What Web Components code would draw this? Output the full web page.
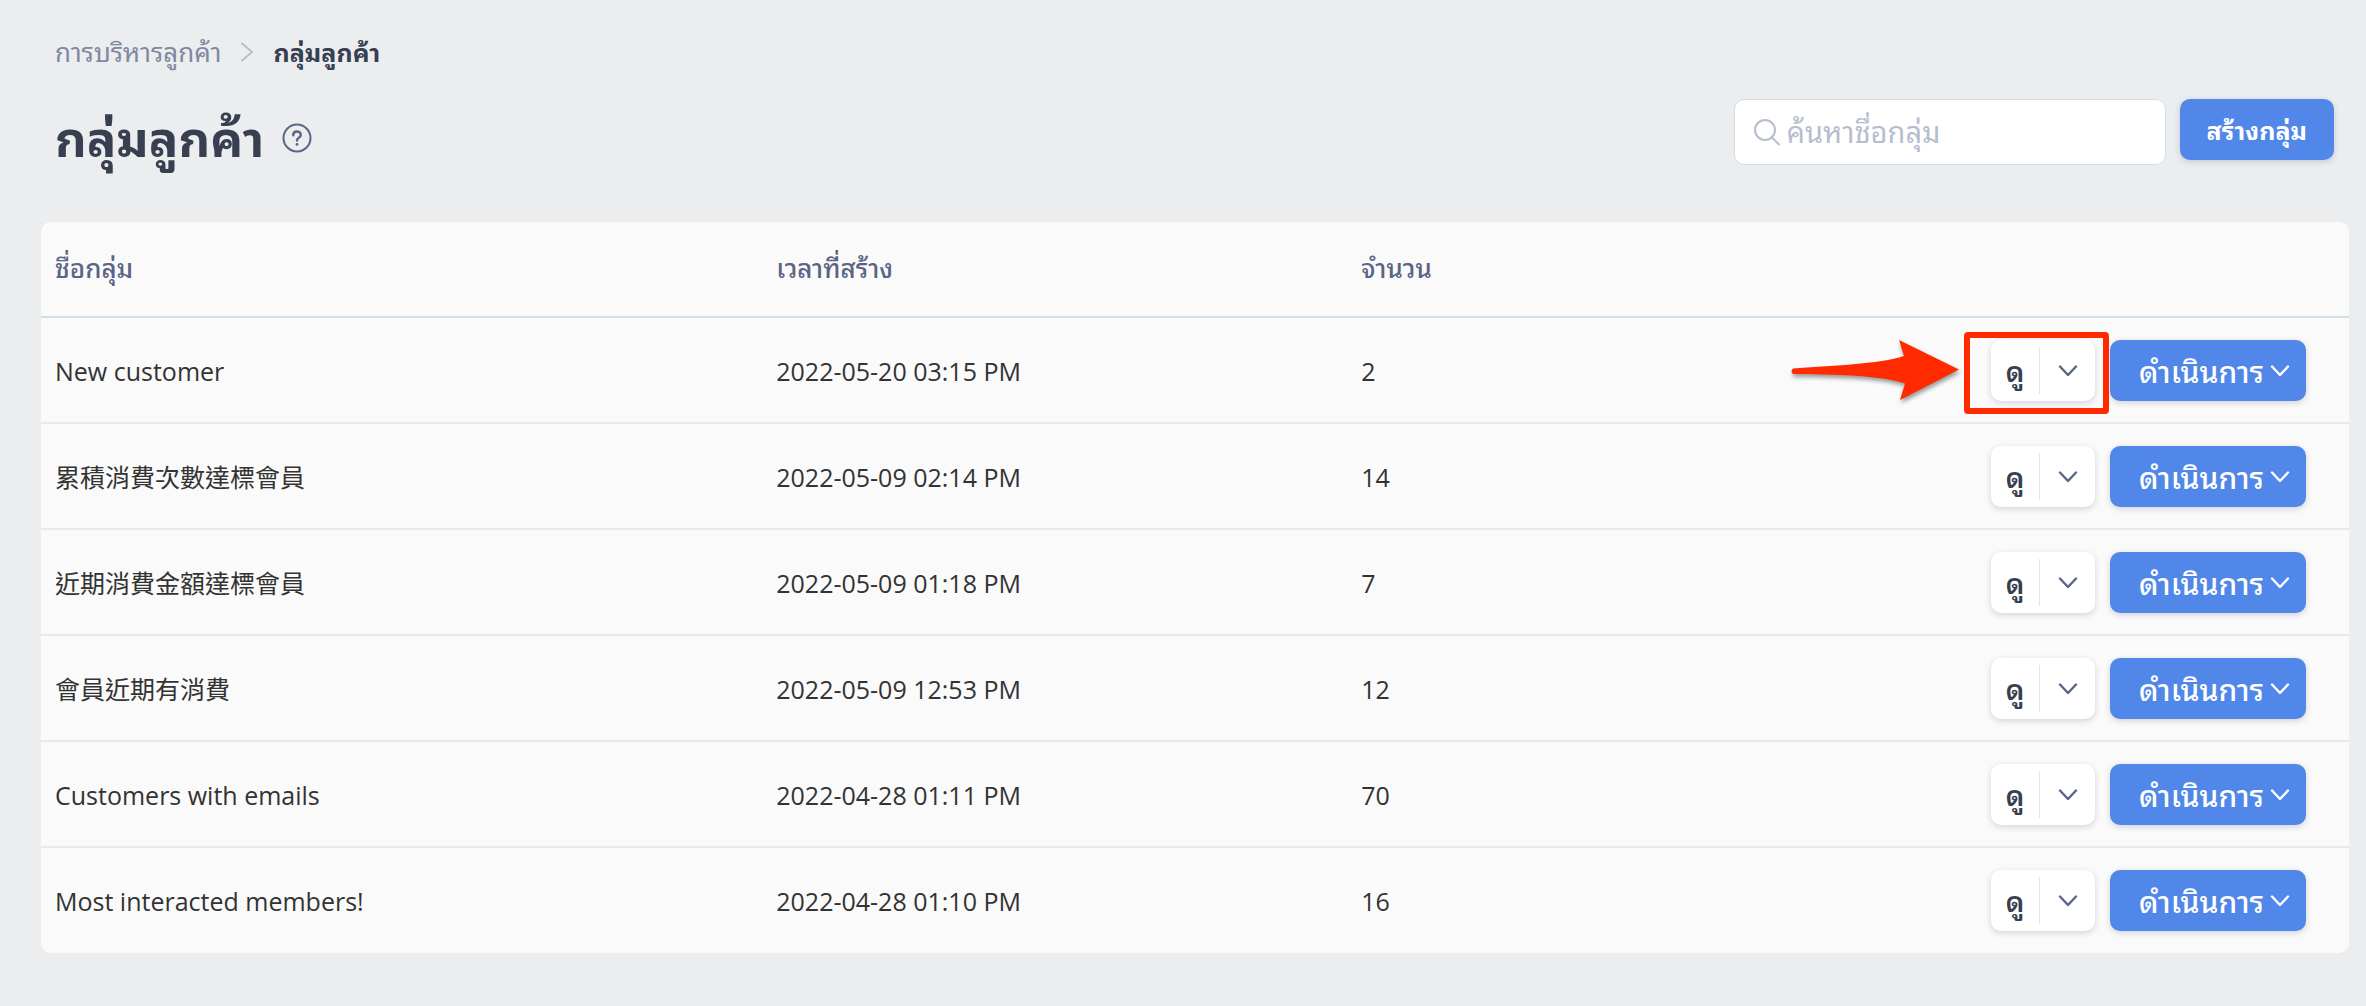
<!DOCTYPE html>
<html lang="th">
<head>
<meta charset="utf-8">
<title>กลุ่มลูกค้า</title>
<style>
:root{
  --blue:#5187e8; --ink:#373f50; --slate:#5a6485; --muted:#8088a0; --faint:#b6bdcf;
  --radius:10px; --shadow:0 2px 6px rgba(40,40,80,.18);
}
*{box-sizing:border-box}
body{margin:0;background:#ecedef;color:#333;font-family:"Open Sans","Noto Sans","Thonburi","Noto Sans Thai Looped","Noto Looped Thai","Loma","Garuda","Waree","Sarabun","Noto Sans Thai","Noto Sans CJK TC",sans-serif;font-size:25px;line-height:36px}
</style>
</head>
<body>
<customer-groups-page></customer-groups-page>
<script>
const define = (name, html, setup) => {
  const template = document.createElement('template');
  template.innerHTML = `<style>*{box-sizing:border-box}button,input{font:inherit;line-height:inherit;margin:0}button{cursor:pointer;border:0}svg{display:block;flex:none}</style>${html}`;
  customElements.define(name, class extends HTMLElement {
    constructor() {
      super();
      this.attachShadow({mode: 'open'}).append(template.content.cloneNode(true));
    }
    connectedCallback() { if (setup) setup(this, this.shadowRoot); }
  });
};

define('chevron-icon', `
<style>:host{display:block}</style>
<svg width="20" height="12" viewBox="0 0 20 12" fill="none" stroke="currentColor" stroke-width="2.4" stroke-linecap="round" stroke-linejoin="round"><path d="M2 1.5 10 10l8-8.5"/></svg>`);

define('bread-crumb', `
<style>
:host{display:block}
nav{display:flex;align-items:center;gap:19px}
a{color:var(--muted);text-decoration:none;font-size:26px}
b{color:var(--ink);font-weight:700}
</style>
<nav><a href="#"><slot name="parent"></slot></a>
<svg width="14" height="20" viewBox="0 0 14 20" fill="none" stroke="#b6bdcf" stroke-width="2" stroke-linecap="round" stroke-linejoin="round"><path d="m2 1.500 10 8.500-10 8.500"/></svg>
<b><slot></slot></b></nav>`);

define('page-title', `
<style>
:host{display:flex;align-items:center;gap:18px;color:var(--ink)}
h1{margin:0;font-size:49px;line-height:72px;font-weight:700}
button{background:none;padding:0;color:var(--slate)}
</style>
<h1><slot></slot></h1>
<button aria-label="?"><svg width="30" height="30" viewBox="0 0 30 30" fill="none" stroke="currentColor" stroke-width="2" stroke-linecap="round"><circle cx="15" cy="15" r="13.500"/><path stroke-width="2.400" d="M11.200 12.200c0-2.300 1.700-3.700 3.800-3.700s3.800 1.400 3.800 3.400c0 2.700-3.800 2.800-3.800 5.600"/><circle cx="15" cy="21.400" r=".6" fill="currentColor" stroke-width="1.600"/></svg></button>`);

define('search-box', `
<style>
:host{display:block;width:432px}
label{display:flex;align-items:center;gap:6px;height:66px;padding:0 18px;background:#fff;border:1px solid #d3dde6;border-radius:var(--radius);color:var(--faint)}
input{flex:1;min-width:0;border:0;outline:0;padding:0;background:none;color:var(--ink);font-size:29px;line-height:48px}
input::placeholder{color:var(--faint);opacity:1}
</style>
<label><svg width="28" height="28" viewBox="0 0 28 28" fill="none" stroke="currentColor" stroke-width="2" stroke-linecap="round"><circle cx="12" cy="12" r="10"/><path d="m19 19.500 7 7"/></svg>
<input type="text"></label>`, (host, root) => {
  const input = root.querySelector('input');
  input.placeholder = host.getAttribute('placeholder');
  input.setAttribute('aria-label', input.placeholder);
});

define('primary-button', `
<style>
:host{display:block}
button{display:flex;align-items:center;height:61px;padding:0 27px;background:var(--blue);color:#fff;border-radius:var(--radius);box-shadow:var(--shadow);font-weight:700;white-space:nowrap}
:host([menu]) button{gap:6px;padding:0 16px 0 29px;font-weight:500;font-size:30px}
:host([menu]) span{padding-top:3px}
chevron-icon{display:none}
:host([menu]) chevron-icon{display:block}
</style>
<button><span><slot></slot></span><chevron-icon></chevron-icon></button>`);

define('split-button', `
<style>
:host{display:flex;align-items:center;height:61px;background:#fff;border-radius:var(--radius);box-shadow:var(--shadow)}
button{background:none;display:flex;align-items:center;justify-content:center;height:47px;padding:0}
.view{width:48px;color:var(--ink);font-weight:600;font-size:28px}
.more{width:56px;color:var(--slate);border-left:1px solid #e2e5ea}
</style>
<button class="view"><slot></slot></button><button class="more" aria-label="▾"><chevron-icon></chevron-icon></button>`);

define('callout-arrow', `
<style>
:host{position:absolute;top:-8px;right:-14px;display:flex;align-items:center;gap:4px;pointer-events:none}
.frame{width:145px;height:82px;border:6px solid #ff2a00;border-radius:4px}
svg{margin-bottom:4px;filter:drop-shadow(1px 3px 2px rgba(0,0,0,.4))}
</style>
<svg width="170" height="72" viewBox="0 0 170 72"><path fill="#ff2a00" d="M3 33.500C40 31 90 29 114 21L109 5l60 29.500L110 65l5-16.500C90 40 45 39.500 3 39q-3-2.500 0-5.500Z"/></svg>
<div class="frame"></div>`);

define('row-actions', `
<style>
:host{display:flex;justify-content:flex-end;gap:15px}
.view{position:relative}
callout-arrow{display:none}
:host([highlight]) callout-arrow{display:flex}
</style>
<div class="view"><split-button>ดู</split-button><callout-arrow></callout-arrow></div>
<primary-button menu>ดำเนินการ</primary-button>`);

define('group-table', `
<style>
:host{display:block;background:#fafafa;border-radius:var(--radius)}
table{width:100%;border-collapse:separate;border-spacing:0;table-layout:fixed}
col.name{width:31.250%}col.time{width:25.350%}
th{padding:28px 14px 30px;text-align:left;font-weight:500;font-size:26px;color:var(--slate);border-bottom:2px solid #d3dfe8}
td{padding:22px 14px 21px;border-bottom:2px solid #e6eaee}
tr:last-child td{border-bottom:0;padding-bottom:22px}
td:last-child{padding-right:43px}
</style>
<table><colgroup><col class="name"><col class="time"><col><col></colgroup>
<thead><tr><th>ชื่อกลุ่ม</th><th>เวลาที่สร้าง</th><th>จำนวน</th><th></th></tr></thead><tbody></tbody></table>`, (host, root) => {
  const groups = [
    ['New customer', '2022-05-20 03:15 PM', 2],
    ['累積消費次數達標會員', '2022-05-09 02:14 PM', 14],
    ['近期消費金額達標會員', '2022-05-09 01:18 PM', 7],
    ['會員近期有消費', '2022-05-09 12:53 PM', 12],
    ['Customers with emails', '2022-04-28 01:11 PM', 70],
    ['Most interacted members!', '2022-04-28 01:10 PM', 16],
  ];
  root.querySelector('tbody').innerHTML = groups.map(([name, time, count], i) =>
    `<tr><td>${name}</td><td>${time}</td><td>${count}</td><td><row-actions${i ? '' : ' highlight'}></row-actions></td></tr>`).join('');
});

define('customer-groups-page', `
<style>
:host{display:block;padding:34px 17px 53px 41px}
header{padding:0 15px 46px 14px}
.bar{display:flex;justify-content:space-between;align-items:flex-start;padding-top:29px}
page-title{padding:3px 0 2px}
.tools{display:flex;align-items:flex-start;gap:14px}
</style>
<header>
<bread-crumb><span slot="parent">การบริหารลูกค้า</span>กลุ่มลูกค้า</bread-crumb>
<div class="bar"><page-title>กลุ่มลูกค้า</page-title>
<div class="tools"><search-box placeholder="ค้นหาชื่อกลุ่ม"></search-box><primary-button>สร้างกลุ่ม</primary-button></div></div>
</header>
<group-table></group-table>`);
</script>
</body>
</html>
